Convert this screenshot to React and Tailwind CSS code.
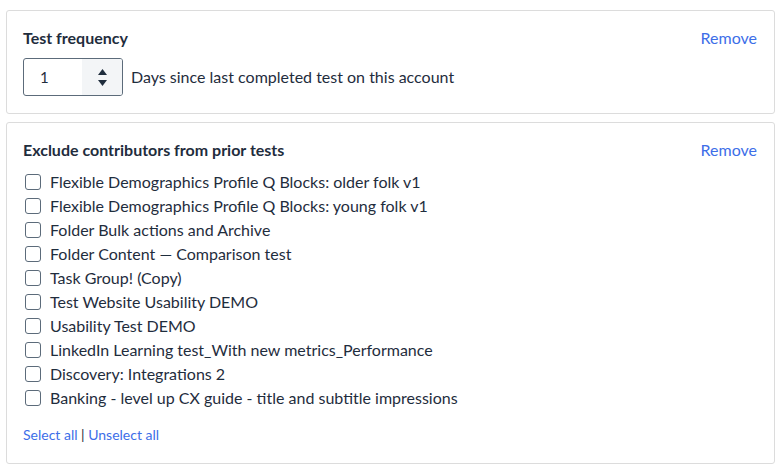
import React from "react";

const items = [
  "Flexible Demographics Profile Q Blocks: older folk v1",
  "Flexible Demographics Profile Q Blocks: young folk v1",
  "Folder Bulk actions and Archive",
  "Folder Content \u2014 Comparison test",
  "Task Group! (Copy)",
  "Test Website Usability DEMO",
  "Usability Test DEMO",
  "LinkedIn Learning test_With new metrics_Performance",
  "Discovery: Integrations 2",
  "Banking - level up CX guide - title and subtitle impressions",
];

export default function App() {
  return (
    <div className="w-[781px] h-[475px] bg-white px-[6px] pt-[10px] text-[#1f2d3d]" style={{ fontFamily: "Lato, 'Open Sans', sans-serif" }}>
      <div className="border border-[#dcdcdc] rounded-[3px] h-[104px] px-[16px] pt-[18px]">
        <div className="flex justify-between items-center h-[18px]">
          <span className="font-bold text-[16px]">Test frequency</span>
          <span className="text-[16px] text-[#3d6ee8] mr-[1px]">Remove</span>
        </div>
        <div className="flex items-center mt-[11px]">
          <div className="w-[100px] h-[38px] border border-[#5c6b7a] rounded-[3px] flex overflow-hidden">
            <div className="flex-1 flex items-center pl-[16px] text-[15px]">1</div>
            <div className="w-[40px] bg-[#f3f5f7] flex flex-col items-center justify-center gap-[5px]">
              <svg width="9" height="6" viewBox="0 0 9 6"><path d="M4.5 0L9 6H0z" fill="#1f2d3d" /></svg>
              <svg width="9" height="6" viewBox="0 0 9 6"><path d="M0 0h9L4.5 6z" fill="#1f2d3d" /></svg>
            </div>
          </div>
          <span className="ml-[8px] text-[16px]">Days since last completed test on this account</span>
        </div>
      </div>
      <div className="border border-[#dcdcdc] rounded-[3px] mt-[8px] h-[342px] px-[16px] pt-[18px]">
        <div className="flex justify-between items-center h-[18px]">
          <span className="font-bold text-[16px]">Exclude contributors from prior tests</span>
          <span className="text-[16px] text-[#3d6ee8] mr-[1px]">Remove</span>
        </div>
        <div className="mt-[11px] flex flex-col">
          {items.map((t) => (
            <label key={t} className="flex items-center h-[24px]">
              <span className="ml-[2px] w-[16px] h-[16px] border border-[#5c6b7a] rounded-[3px] bg-white" />
              <span className="ml-[9px] text-[16px]">{t}</span>
            </label>
          ))}
        </div>
        <div className="mt-[15px] text-[14px] leading-[20px] text-[#3d6ee8]">
          Select all <span className="text-[#1f2d3d]">|</span> Unselect all
        </div>
      </div>
    </div>
  );
}
